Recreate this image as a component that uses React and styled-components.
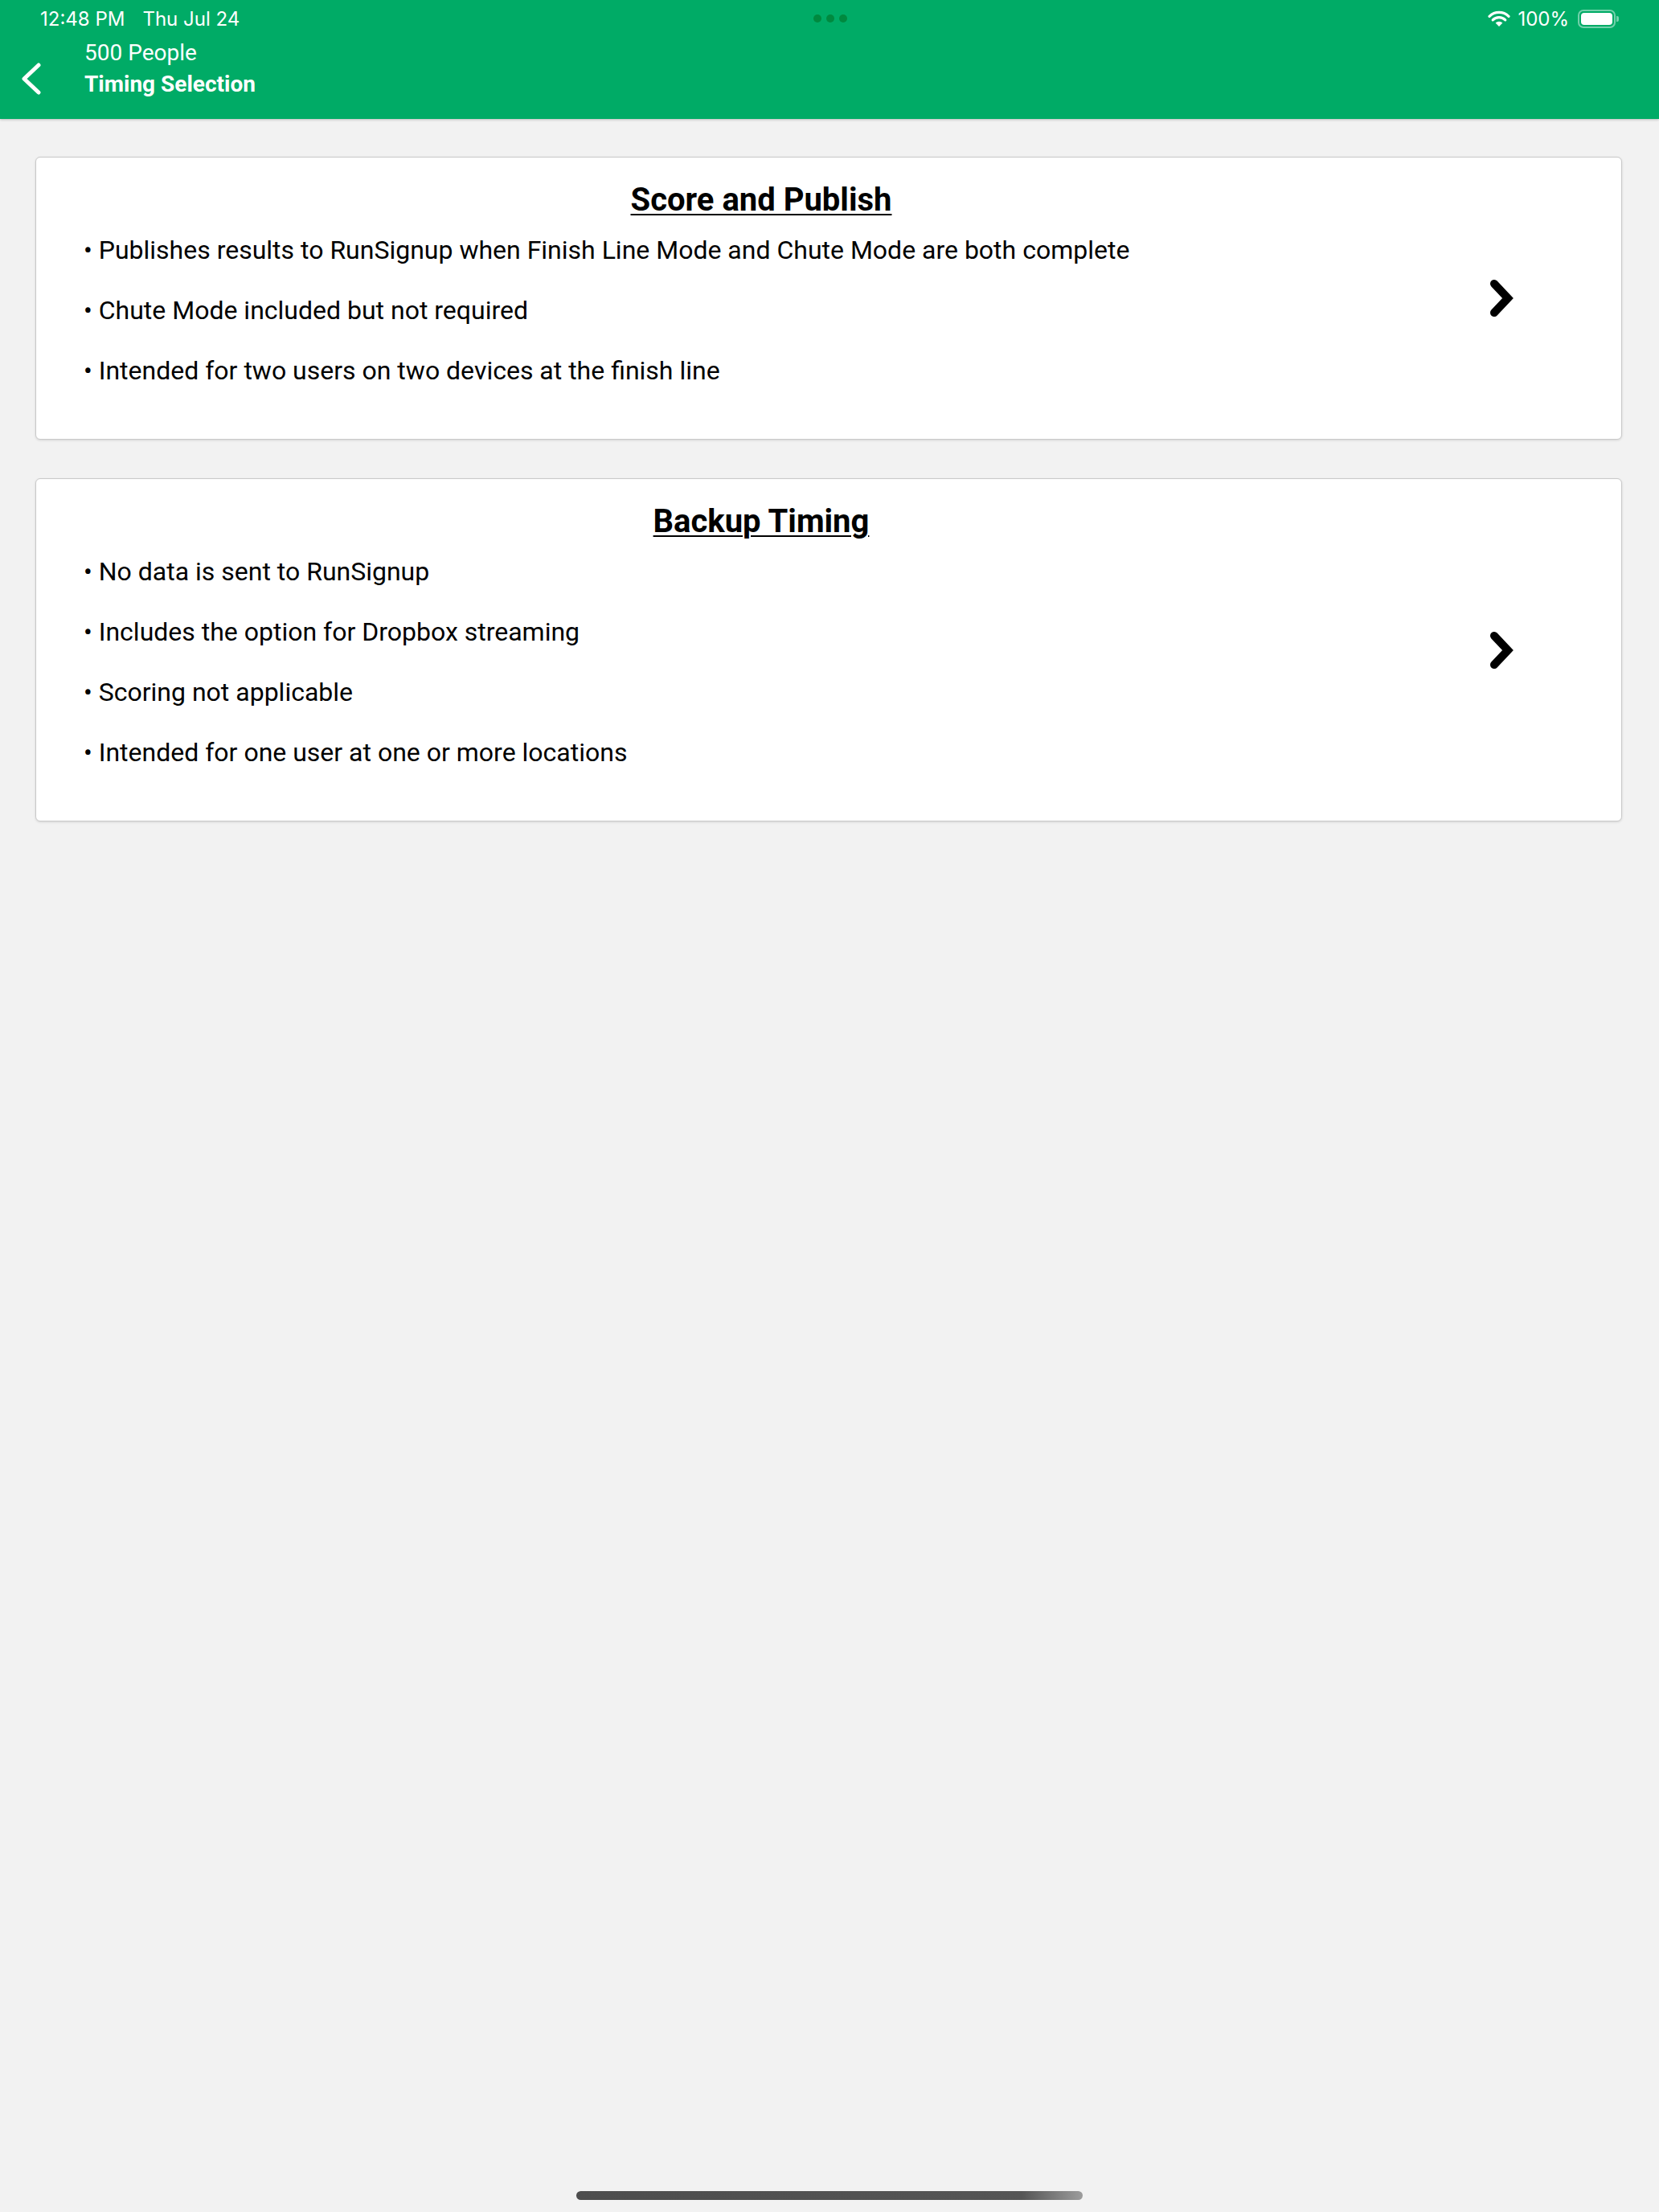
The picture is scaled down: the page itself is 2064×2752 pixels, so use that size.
import React from 'react';
import styled, { createGlobalStyle } from 'styled-components';

const modes = [
  {
    title: 'Score and Publish',
    points: [
      'Publishes results to RunSignup when Finish Line Mode and Chute Mode are both complete',
      'Chute Mode included but not required',
      'Intended for two users on two devices at the finish line',
    ],
  },
  {
    title: 'Backup Timing',
    points: [
      'No data is sent to RunSignup',
      'Includes the option for Dropbox streaming',
      'Scoring not applicable',
      'Intended for one user at one or more locations',
    ],
  },
];

const App = () => (
  <Root>
    <GlobalStyle />
    <Header>
      <StatusBar>
        <Clock>
          <span>12:48 PM</span>
          <span>Thu Jul 24</span>
        </Clock>
        <Dots>
          <Dot />
          <Dot />
          <Dot />
        </Dots>
        <Indicators>
          <WifiIcon />
          <span>100%</span>
          <Battery>
            <BatteryFill />
          </Battery>
        </Indicators>
      </StatusBar>
      <NavRow>
        <BackButton>
          <svg width="24" height="40" viewBox="0 0 24 40">
            <polyline
              points="21,3 3,20 21,37"
              fill="none"
              stroke="#fff"
              strokeWidth="5"
              strokeLinecap="round"
              strokeLinejoin="round"
            />
          </svg>
        </BackButton>
        <NavTitles>
          <EventName>500 People</EventName>
          <ScreenName>Timing Selection</ScreenName>
        </NavTitles>
      </NavRow>
    </Header>

    <Content>
      {modes.map(mode => (
        <ModeCard key={mode.title}>
          <CardBody>
            <CardTitle>{mode.title}</CardTitle>
            <PointList>
              {mode.points.map(point => (
                <Point key={point}>• {point}</Point>
              ))}
            </PointList>
          </CardBody>
          <ChevronCell>
            <svg width="32" height="48" viewBox="0 0 32 48">
              <polyline
                points="6,6 23,24 6,42"
                fill="none"
                stroke="#000"
                strokeWidth="10"
                strokeLinecap="round"
                strokeLinejoin="miter"
              />
            </svg>
          </ChevronCell>
        </ModeCard>
      ))}
    </Content>

    <HomeBar />
  </Root>
);

export default App;

const WifiIcon = () => (
  <svg width="28" height="20" viewBox="0 0 28 20">
    <path d="M14 20 L9.6 15.4 A6.4 6.4 0 0 1 18.4 15.4 Z" fill="#fff" />
    <path
      d="M6.2 11.8 A11 11 0 0 1 21.8 11.8"
      fill="none"
      stroke="#fff"
      strokeWidth="3.2"
      strokeLinecap="round"
    />
    <path
      d="M2 7.4 A17 17 0 0 1 26 7.4"
      fill="none"
      stroke="#fff"
      strokeWidth="3.2"
      strokeLinecap="round"
    />
  </svg>
);

const GlobalStyle = createGlobalStyle`
  html, body {
    margin: 0;
    padding: 0;
    background: #f2f2f2;
  }
  * {
    box-sizing: border-box;
  }
`;

const Root = styled.div`
  min-height: 2752px;
  display: flex;
  flex-direction: column;
  background: #f2f2f2;
  font-family: Roboto, "Liberation Sans", sans-serif;
`;

const Header = styled.header`
  height: 148px;
  background: #00ab66;
  color: #fff;
  box-shadow: 0 1px 3px rgba(0, 0, 0, 0.22);
  position: relative;
  z-index: 1;
`;

const StatusBar = styled.div`
  height: 46px;
  display: flex;
  align-items: center;
  justify-content: space-between;
  padding: 0 54px 0 50px;
  font-family: Inter, Roboto, sans-serif;
  font-size: 24px;
  font-weight: 400;
`;

const Clock = styled.div`
  display: flex;
  gap: 22px;
  width: 300px;
`;

const Dots = styled.div`
  display: flex;
  gap: 6px;
  margin-left: 6px;
`;

const Dot = styled.div`
  width: 10px;
  height: 10px;
  border-radius: 50%;
  background: #00893f;
`;

const Indicators = styled.div`
  width: 300px;
  display: flex;
  align-items: center;
  justify-content: flex-end;
  gap: 9px;
`;

const Battery = styled.div`
  position: relative;
  width: 47px;
  height: 23px;
  border: 2px solid rgba(255, 255, 255, 0.45);
  border-radius: 7px;
  padding: 2px;
  margin-left: 2px;

  &::after {
    content: '';
    position: absolute;
    right: -6px;
    top: 6px;
    width: 3px;
    height: 7px;
    border-radius: 0 2px 2px 0;
    background: rgba(255, 255, 255, 0.45);
  }
`;

const BatteryFill = styled.div`
  width: 100%;
  height: 100%;
  background: #fff;
  border-radius: 4px;
`;

const NavRow = styled.div`
  display: flex;
  align-items: flex-start;
  padding-left: 27px;
`;

const BackButton = styled.div`
  margin-top: 32px;
  margin-right: 54px;
  display: flex;
`;

const NavTitles = styled.div`
  display: flex;
  flex-direction: column;
  font-size: 28px;
  line-height: 39px;
`;

const EventName = styled.div`
  font-weight: 400;
`;

const ScreenName = styled.div`
  font-weight: 700;
`;

const Content = styled.main`
  display: flex;
  flex-direction: column;
  gap: 48px;
  padding: 47px 46px 0 44px;
`;

const ModeCard = styled.section`
  display: flex;
  background: #fff;
  border: 1px solid #c9c9c9;
  border-radius: 6px;
  box-shadow: 0 1px 3px rgba(0, 0, 0, 0.12);
`;

const CardBody = styled.div`
  flex: 1;
  padding: 27px 0 47px 59px;
`;

const CardTitle = styled.h2`
  margin: 0 0 0 -59px;
  text-align: center;
  font-size: 40px;
  line-height: 51px;
  font-weight: 700;
  color: #000;
  text-decoration: underline;
  text-decoration-thickness: 2px;
  text-underline-offset: 4px;
`;

const PointList = styled.ul`
  list-style: none;
  margin: 0;
  padding: 0;
`;

const Point = styled.li`
  font-size: 32px;
  line-height: 75px;
  color: #000;
`;

const ChevronCell = styled.div`
  width: 168px;
  display: flex;
  align-items: center;
  padding-left: 4px;
`;

const HomeBar = styled.div`
  width: 630px;
  height: 11px;
  margin: auto auto 15px;
  border-radius: 6px;
  background: linear-gradient(90deg, #4d4d4d 0%, #555 88%, #9c9c9c 100%);
`;
